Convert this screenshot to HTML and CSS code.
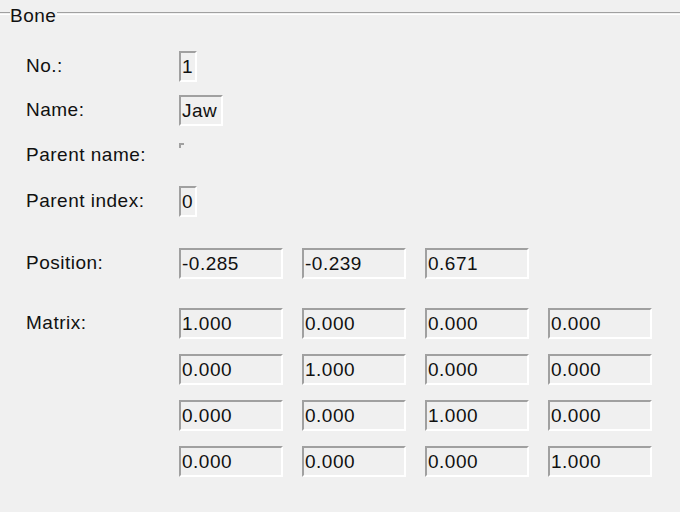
FILE: index.html
```html
<!DOCTYPE html>
<html>
<head>
<meta charset="utf-8">
<link rel="stylesheet" href="styles.css">
</head>
<body>
<div class="group">
  <div class="group-head">
    <div class="etch etch-lead"></div>
    <span class="legend">Bone</span>
    <div class="etch etch-fill"></div>
  </div>
  <div class="rows">
    <div class="row r44"><span class="label">No.:</span><span class="field w17">1</span></div>
    <div class="row r44"><span class="label">Name:</span><span class="field w43">Jaw</span></div>
    <div class="row r46"><span class="label">Parent name:</span><span class="field empty"></span></div>
    <div class="row r46"><span class="label">Parent index:</span><span class="field w17">0</span></div>
    <div class="row r46 pos"><span class="label">Position:</span>
      <div class="fields">
        <span class="field wide">-0.285</span><span class="field wide">-0.239</span><span class="field wide">0.671</span>
      </div>
    </div>
    <div class="matrix">
      <span class="label mlabel">Matrix:</span>
      <div class="grid">
        <span class="field wide">1.000</span><span class="field wide">0.000</span><span class="field wide">0.000</span><span class="field wide">0.000</span>
        <span class="field wide">0.000</span><span class="field wide">1.000</span><span class="field wide">0.000</span><span class="field wide">0.000</span>
        <span class="field wide">0.000</span><span class="field wide">0.000</span><span class="field wide">1.000</span><span class="field wide">0.000</span>
        <span class="field wide">0.000</span><span class="field wide">0.000</span><span class="field wide">0.000</span><span class="field wide">1.000</span>
      </div>
    </div>
  </div>
</div>
</body>
</html>
```
FILE: styles.css
```css
html, body {
  margin: 0;
  padding: 0;
  background: #f0f0f0;
}
body {
  width: 680px;
  height: 512px;
  overflow: hidden;
  font-family: "Liberation Sans", Arial, sans-serif;
  font-size: 19px;
  letter-spacing: 0.5px;
  color: #111;
}
.group-head {
  display: flex;
  align-items: flex-start;
  padding-top: 5px;
  height: 22px;
}
.etch {
  margin-top: 7px;
  height: 1px;
  border-top: 1px solid #a0a0a0;
  border-bottom: 1px solid #ffffff;
}
.etch-lead { width: 10px; }
.etch-fill { flex: 1; }
.legend {
  line-height: 22px;
  padding-right: 1px;
}
.rows {
  padding-top: 17px;
  padding-left: 26px;
}
.row {
  display: flex;
  align-items: center;
}
.r44 { height: 44px; }
.r46 { height: 46px; }
.pos { margin-top: 16px; }
.label {
  width: 153px;
  flex: none;
}
.field {
  box-sizing: border-box;
  height: 31px;
  line-height: 27px;
  padding-left: 1px;
  border-top: 2px solid #a0a0a0;
  border-left: 2px solid #a0a0a0;
  border-bottom: 2px solid #ffffff;
  border-right: 2px solid #ffffff;
  background: #f0f0f0;
  white-space: nowrap;
  overflow: hidden;
  flex: none;
}
.w17 { width: 18px; }
.w43 { width: 44px; }
.wide { width: 104px; }
.empty {
  width: 5px;
  height: 5px;
  align-self: flex-start;
  margin-top: 11px;
  border-width: 2px 0 0 2px;
}
.fields {
  display: flex;
  gap: 19px;
}
.matrix {
  display: flex;
  margin-top: 14px;
}
.mlabel {
  line-height: 46px;
  height: 46px;
}
.grid {
  display: grid;
  grid-template-columns: repeat(4, 104px);
  grid-auto-rows: 46px;
  column-gap: 19px;
  align-items: center;
}
```
